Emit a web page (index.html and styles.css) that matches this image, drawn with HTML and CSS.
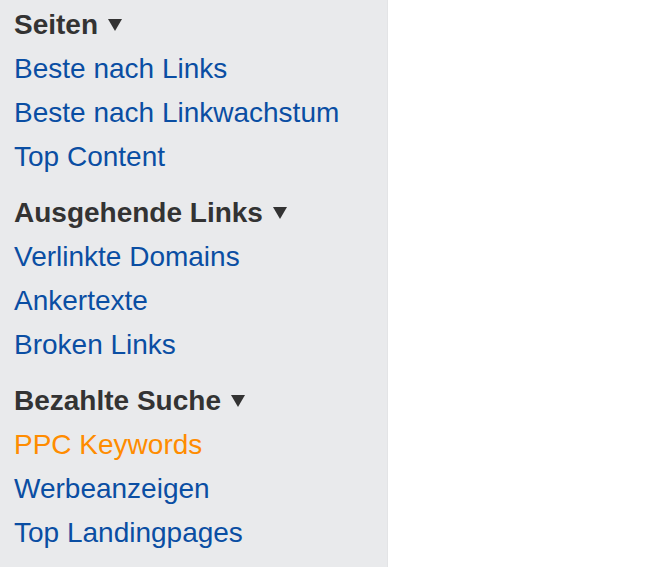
FILE: index.html
```html
<!DOCTYPE html>
<html lang="de">
<head>
  <meta charset="UTF-8">
  <title>Navigation</title>
  <link rel="stylesheet" href="styles.css">
</head>
<body>
  <nav class="sidebar">
    <section class="group">
      <h3 class="group-title">Seiten <span class="caret"></span></h3>
      <ul>
        <li><a href="#">Beste nach Links</a></li>
        <li><a href="#">Beste nach Linkwachstum</a></li>
        <li><a href="#">Top Content</a></li>
      </ul>
    </section>

    <section class="group">
      <h3 class="group-title">Ausgehende Links <span class="caret"></span></h3>
      <ul>
        <li><a href="#">Verlinkte Domains</a></li>
        <li><a href="#">Ankertexte</a></li>
        <li><a href="#">Broken Links</a></li>
      </ul>
    </section>

    <section class="group">
      <h3 class="group-title">Bezahlte Suche <span class="caret"></span></h3>
      <ul>
        <li><a href="#" class="active">PPC Keywords</a></li>
        <li><a href="#">Werbeanzeigen</a></li>
        <li><a href="#">Top Landingpages</a></li>
      </ul>
    </section>
  </nav>
</body>
</html>
```

FILE: styles.css
```css
html, body {
  margin: 0;
  height: 100%;
  background-color: #fff;
}
body {
  font-family: "Liberation Sans", Arial, sans-serif;
  font-size: 28px;
}
.sidebar {
  width: 388px;
  min-height: 100%;
  box-sizing: border-box;
  padding: 3px 14px;
  background-color: #e9eaec;
  border-right: 1px solid #e3e4e6;
}
.group + .group {
  margin-top: 12px;
}
.group-title {
  margin: 0;
  font-size: 28px;
  line-height: 44px;
  font-weight: bold;
  color: #333;
}
.caret {
  display: inline-block;
  width: 0;
  height: 0;
  margin-left: 2px;
  vertical-align: 3px;
  border-left: 7px solid transparent;
  border-right: 7px solid transparent;
  border-top: 12px solid #333;
}
ul {
  list-style: none;
  margin: 0;
  padding: 0;
}
li {
  line-height: 44px;
}
a {
  color: #0a4ea3;
  text-decoration: none;
}
a.active {
  color: #ff8c00;
}
```
